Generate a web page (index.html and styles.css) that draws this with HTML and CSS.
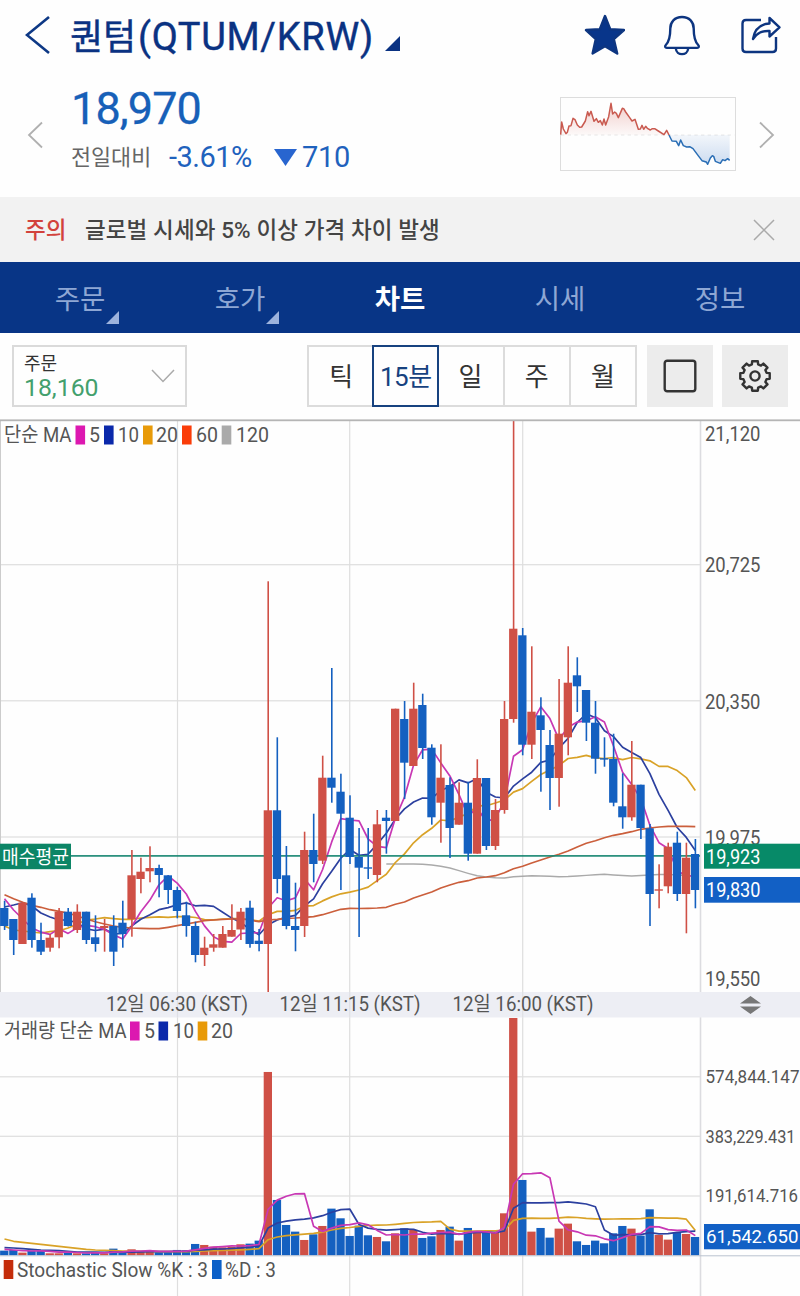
FILE: index.html
```html
<!DOCTYPE html>
<html lang="ko">
<head>
<meta charset="utf-8">
<title>퀀텀(QTUM/KRW)</title>
<link rel="stylesheet" href="styles.css">
</head>
<body>
<main class="app">
  <header class="titlebar">
    <svg class="back" width="26" height="40" viewBox="0 0 26 40"><path d="M24 2 2 20 24 38"/></svg>
    <h1 class="title"><span class="title-name">퀀텀</span><span class="title-pair">(QTUM/KRW)</span></h1>
    <svg class="title-mark" width="15" height="15" viewBox="0 0 15 15"><path d="M15 0V15H0Z"/></svg>
    <div class="actions">
      <svg width="42" height="42" viewBox="0 0 42 42"><path class="solid" d="M22 2 27.200 15.200 41 16 30.800 25 34.200 39.500 22 32.300 9.600 39.500 12.800 25 3 16 16.800 15.200Z"/></svg>
      <svg width="38" height="42" viewBox="0 0 38 42"><path d="M19 3C11.500 3 7.300 8 7.300 14.500 7.300 22.500 6.600 27.200 2.800 31 1.600 32.200 2.100 33.900 3.800 33.900H34.200C35.900 33.900 36.400 32.200 35.200 31 31.400 27.200 30.700 22.500 30.700 14.500 30.700 8 26.500 3 19 3ZM12.800 34.500C13.500 42 24.500 42 25.200 34.500"/></svg>
      <svg width="42" height="42" viewBox="0 0 42 42"><path d="M22 6H7Q3.500 6 3.500 9.500V34.500Q3.500 38 7 38H33.500Q37 38 37 34.500V23"/><path d="M30.500 4 40.500 13.300 30.500 22.500V17C23 16.500 18.500 18.500 14 25 15.500 15.500 21.500 10 30.500 9.500Z"/></svg>
    </div>
  </header>

  <section class="quote">
    <svg class="step" width="16" height="30" viewBox="0 0 16 30"><path d="M15 2.500 2 15 15 27.500"/></svg>
    <div class="quote-body">
      <strong class="price">18,970</strong>
      <div class="change"><span class="change-label">전일대비</span><span class="change-rate">-3.61%</span><svg width="23" height="17" viewBox="0 0 23 17"><path d="M0 0H23L11.500 17Z"/></svg><span class="change-diff">710</span></div>
    </div>
    <svg class="spark" width="176" height="74" viewBox="481 291 528 222">
      <defs>
        <linearGradient id="up" x1="0" y1="0" x2="0" y2="1"><stop offset="0" stop-color="#cf5147" stop-opacity=".28"/><stop offset="1" stop-color="#cf5147" stop-opacity=".03"/></linearGradient>
        <linearGradient id="down" x1="0" y1="0" x2="0" y2="1"><stop offset="0" stop-color="#1b62c0" stop-opacity=".05"/><stop offset="1" stop-color="#1b62c0" stop-opacity=".22"/></linearGradient>
      </defs>
      <rect class="spark-frame" x="482.500" y="292.500" width="525" height="219"/>
      <path class="spark-base" d="M484 405H1005"/>
      <path fill="url(#up)" d="M483 404 486 366 499 401 508 378 514 377 520 355 540 382 546 381 557 363 564 335 568 347 574 334 583 364 590 356 596 367 602 362 608 375 613 357 618 375 627 350 634 310 639 342 645 336 656 353 668 325 678 336 690 353 697 363 706 358 716 388 722 387 727 376 732 388 738 379 752 390 765 386 793 404 801 391 808 405Z"/>
      <path fill="url(#down)" d="M808 405 817 423 830 424 837 437 843 420 851 437 861 441 870 440 880 446 907 482 924 493 932 474 938 467 947 484 962 490 969 479 990 481V405Z"/>
      <path class="spark-up" d="M483 404 486 366 491 387 499 401 503 397 508 378 514 377 520 355 526 359 533 375 540 382 546 381 557 363 564 335 568 347 574 334 583 364 590 356 596 367 602 362 608 375 613 357 618 375 627 350 634 310 639 342 645 336 650 340 656 353 668 325 672 326 678 336 690 353 697 363 706 358 716 388 722 387 727 376 732 388 738 379 743 385 752 390 758 386 765 386 776 393 793 404 801 391 808 405"/>
      <path class="spark-down" d="M808 405 817 423 830 424 837 437 843 420 851 437 861 441 870 440 880 446 895 466 907 482 920 486 924 493 932 474 938 467 942 469 947 484 962 490 969 479 976 482 984 476 990 481"/>
    </svg>
    <svg class="step" width="16" height="30" viewBox="0 0 16 30"><path d="M1 2.500 14 15 1 27.500"/></svg>
  </section>

  <section class="notice">
    <b class="notice-tag">주의</b><span class="notice-text">글로벌 시세와 5% 이상 가격 차이 발생</span>
    <svg width="22" height="22" viewBox="0 0 22 22"><path d="M1 1 21 21M21 1 1 21"/></svg>
  </section>

  <nav class="tabs">
    <a class="tab tab-menu">주문</a><a class="tab tab-menu">호가</a><a class="tab tab-active">차트</a><a class="tab">시세</a><a class="tab">정보</a>
  </nav>

  <section class="toolbar">
    <div class="order">
      <div class="order-text"><span class="order-label">주문</span><span class="order-value">18,160</span></div>
      <svg width="24" height="14" viewBox="0 0 24 14"><path d="M1 1 12 12.500 23 1"/></svg>
    </div>
    <div class="periods">
      <span class="period">틱</span><span class="period period-active">15분</span><span class="period">일</span><span class="period">주</span><span class="period">월</span>
    </div>
    <div class="tool"><svg width="34" height="34" viewBox="0 0 34 34"><rect x="1.700" y="1.700" width="30.600" height="30.600" rx="2.500"/></svg></div>
    <div class="tool tool-last"><svg width="34" height="34" viewBox="-17 -17 34 34"><path id="gear"/><circle r="4.600"/></svg></div>
  </section>

  <svg id="chart" class="chart" width="800" height="877" viewBox="0 419 800 877"></svg>
</main>
<script src="chart.js"></script>
</body>
</html>
```

FILE: styles.css
```css
* { box-sizing: border-box; }
body { margin: 0; background: #fff; font-family: Roboto, "Noto Sans CJK KR", sans-serif; color: #333; }
.app { width: 800px; height: 1296px; display: flex; flex-direction: column; overflow: hidden; background: #fefefe; }
svg { display: block; flex: none; fill: none; }
span, b, strong, h1, a { white-space: nowrap; }

.titlebar { height: 73px; flex: none; display: flex; align-items: center; padding: 0 19px 0 25px; color: #0a3282; }
.back { stroke: #0d3885; stroke-width: 2.6; margin-top: -3px; }
.title { margin: 2px 0 0 19px; width: 305px; display: flex; align-items: baseline; font-weight: 400; font-size: 38px; line-height: 50px; -webkit-text-stroke: 0.4px #0a3282; }
.title-name { font-size: 36px; width: 68px; }
.title-pair { letter-spacing: 0.7px; }
.title-mark { margin: 14px 0 0 10px; fill: #0a3282; }
.actions { margin: -4px 0 0 auto; display: flex; align-items: center; gap: 38px; stroke: #0d3580; stroke-width: 2.4; stroke-linejoin: round; }
.actions .solid { fill: #08358a; }

.quote { height: 124px; flex: none; display: flex; padding: 0 25px 0 27px; }
.step { margin-top: 47px; stroke: #b0b0b0; stroke-width: 1.8; }
.quote-body { margin-left: 28px; width: 489px; display: flex; flex-direction: column; }
.price { font-weight: 400; font-size: 45px; line-height: 54px; letter-spacing: -0.9px; color: #1760b8; margin-top: 9px; -webkit-text-stroke: 0.3px #1760b8; }
.change { display: flex; align-items: center; height: 40px; margin-top: 1px; font-size: 29px; color: #1f62bd; }
.change-label { width: 98px; font-size: 21.800px; color: #666; margin-top: -3px; }
.change-rate { width: 105px; letter-spacing: -0.5px; }
.change svg { fill: #2865cf; }
.change-diff { margin-left: 5px; letter-spacing: -0.3px; }
.spark { margin: 24px 23px 0 1px; }
.spark-frame { stroke: #ddd; stroke-width: 3; }
.spark-base { stroke: #ddd; stroke-width: 2; stroke-dasharray: 10 10; }
.spark-up { stroke: #c95a50; stroke-width: 4.500; stroke-linejoin: round; }
.spark-down { stroke: #2a6eb5; stroke-width: 4.500; stroke-linejoin: round; }

.notice { height: 65px; flex: none; background: #f2f2f2; display: flex; align-items: center; padding: 0 25px 4px; font-size: 22.500px; }
.notice-tag { width: 60px; font-weight: 500; color: #d2423c; }
.notice-text { font-weight: 500; color: #444; letter-spacing: 0.1px; }
.notice svg { margin: 4px 0 0 auto; stroke: #aaa; stroke-width: 1.500; }

.tabs { height: 71px; flex: none; background: #083586; display: flex; }
.tab { flex: 1; position: relative; text-align: center; font-size: 27.500px; line-height: 76px; color: #8ea7d4; }
.tab-active { color: #fff; font-weight: 700; }
.tab-menu::after { content: ""; position: absolute; left: 106px; top: 49px; border-left: 13px solid transparent; border-bottom: 13px solid #9db3dd; }

.toolbar { height: 86px; flex: none; display: flex; align-items: flex-start; padding: 12px 12px 0; }
.order { width: 175px; height: 62px; border: 2px solid #dadada; display: flex; align-items: center; justify-content: space-between; padding: 0 10px; }
.order svg { stroke: #aaa; stroke-width: 1.500; }
.order-text { display: flex; flex-direction: column; }
.order-label { font-size: 18px; line-height: 22px; margin-top: 2px; }
.order-value { font-size: 24.800px; line-height: 26px; color: #43a06d; }
.periods { margin-left: 120px; display: flex; height: 62px; border: 2px solid #dcdcdc; width: 330px; }
.period { flex: 1; border-left: 2px solid #dcdcdc; text-align: center; font-size: 26px; line-height: 61px; color: #333; }
.period:first-child { border-left: 0; }
.period-active { margin: -2px -1px -2px -1px; border: 2px solid #17427f; color: #17427f; position: relative; flex: 0 0 67px; letter-spacing: -0.5px; }
.period-active + .period { border-left: 0; }
.tool { width: 66px; height: 62px; margin-left: 10px; background: #ececec; display: flex; align-items: center; justify-content: center; }
.tool svg { stroke: #333; stroke-width: 2.400; stroke-linejoin: round; }
.tool-last { margin-left: 9px; }

.chart { font-size: 20px; }
.chart .lbl { fill: #555; }
.chart .on { fill: #fff; }
```

FILE: chart.js
```js
// Candle: [direction, high, body top, body bottom, low] in chart units
const candles = [
['d',900.7,908,926,930],['d',919,919,940,955],['u',902,902.7,944,944],['d',893.3,897.7,940,947.7],['d',922.7,940,951.7,955],
['u',934,937.7,947.7,951.7],['u',908,911.7,937.3,948.3],['d',908,911.7,926,926.5],['u',904.3,911.7,930,933],['d',911.7,911.7,940,944],
['d',915.3,937.3,944,951.7],['u',919,926,928,951.7],['d',915.3,926,951.7,966],['d',900.7,922.7,934,947.7],['u',850,875.3,919,936.7],
['u',857.7,871.7,879,893.3],['u',846.3,868,871.3,882.3],['d',864.7,868,875,897.3],['d',875.3,875.3,890,904],['d',886.7,890,911,918.3],
['d',901.7,915.3,926,936.7],['d',921.7,926,955,962.3],['u',936.7,947.7,955,966],['u',934,944.3,947.7,951.7],['u',926,934,947.7,947.7],
['u',904.3,930,936.7,936.7],['u',908,911.7,929.5,940],['d',900.7,907.7,944,947.7],['d',929,940.7,944,951.3],['u',581.3,810.3,944,992],
['d',737.3,810.3,879,893.3],['d',846,875.3,926,929.3],['d',882.7,926,930,951.3],['u',831.7,850,926,937],['d',813.7,850,864,882.3],
['u',755.7,777.7,860.7,864],['d',668,777.7,787.7,802.7],['d',773.7,791.7,813.7,890],['d',795.3,817.7,857,864],['d',828,857,867.7,937],
['d',828,867.3,868.7,879],['u',810,824.3,875,882.3],['d',810,817.7,821,853.7],['u',708.7,708.7,821,821],['d',701,719,762.7,799],
['u',682.7,708.7,766,766],['d',693.7,705,748,759],['d',744.3,747.7,817.3,824.7],['u',744.3,777.7,802.7,842.7],['d',777.3,785,828,858],
['u',782.3,802.7,824.7,824.7],['d',781.7,802.7,853.7,860.7],['u',759.3,778,853.7,853.7],['d',778,778,846,850],['u',799,810,846,850],
['u',701,719,810,813.7],['u',421,628.7,719,722.7],['d',628,635.3,744.7,755.3],['u',646.3,711.7,744.7,759],['d',697.3,715.3,730,791.7],
['d',730,745,778,810],['u',679,733.7,778,806.7],['u',646.3,682.7,737.3,755.3],['d',657.3,675.3,686.3,712],['d',690,690,722.7,741],
['d',701,722.7,758.7,773.7],['d',737.3,758.2,759.6,766.7],['d',733.7,759,802.7,806.3],['d',773.3,806.3,817.3,828.7],['u',741,784.7,817.3,820.7],
['d',784.7,784.7,828,839],['d',824,828.3,894,926],['u',864.3,889.3,890.7,908.3],['u',842.7,846.7,886.3,893.3],['d',831.7,842.7,894,901],
['u',842.7,857.7,894,933.3],['d',839,854,890,908.3]];

// Volume bar heights, in thirds of a pixel
const volumes = [14,16,8,14,14,6,6,10,6,6,10,6,20,9,18,11,13,9,9,16,15,34,31,26,24,26,33,35,44,550,166,91,71,46,63,88,140,111,58,89,60,55,42,66,81,76,52,57,76,86,44,82,71,69,69,126,732,226,71,82,53,80,95,42,31,44,36,66,88,80,59,138,61,47,69,64,55];
const BASE = 1255.3, X0 = 4.5, STEP = 9.09;
const RED = '#cf5046', BLUE = '#1460c0';
const MAG = '#c838b4', NAVY = '#2c409f', GOLD = '#d9a227', ORANGE = '#cb5f3c', GREY = '#aaa';
const x = i => +(X0 + STEP * i).toFixed(1);

// Moving average with values known for bars before the window fills
function average(values, n, head) {
  return values.map((_, i) => i < n - 1 ? head[i] : values.slice(i - n + 1, i + 1).reduce((a, b) => a + b) / n);
}
const line = (ys, color, start = 0, w = 1.7) =>
  `<polyline points="${ys.map((y, i) => x(i + start) + ',' + y.toFixed(1)).join(' ')}" stroke="${color}" stroke-width="${w}" stroke-linejoin="round"/>`;
const rect = (a, b, w, h, f) => `<rect x="${a}" y="${b}" width="${w}" height="${h}" fill="${f}"/>`;
const text = (a, b, s, w, size = 20, cls = 'lbl') =>
  `<text class="${cls}" x="${a}" y="${b}" font-size="${size}" textLength="${w}" lengthAdjust="spacingAndGlyphs">${s}</text>`;

let out = '';
for (const y of [564.7, 700.8, 837, 1076.8, 1136.3, 1196]) out += rect(0, y - .6, 700, 1.2, '#dedede');
for (const gx of [177.5, 349.7, 522.7]) out += rect(gx - .6, 421, 1.2, 875, '#dedede');
out += rect(0, 421, 1, 571, '#ccc') + rect(699.7, 421, 1.6, 875, '#dcdce0');

const closes = candles.map(c => c[0] === 'u' ? c[2] : c[3]);
const ma60 = [894.7,898.7,902.3,905.3,907.3,909.7,911.3,913,916,919,921.7,924,926,927.3,928,928.3,928.7,928.7,927.3,925.7,924,922.3,920.7,920,919.3,919,919,920,921.7,920,919.3,918.3,918,917.3,916.7,914.7,912,909.3,908.3,908.5,908.3,908,907.3,904.3,902,898,895,892,888,885,882.3,880.7,878,877,875.7,872.7,868.7,866.3,863,860,857,854.3,851,847,843.3,840.7,837.7,835.3,833.7,831.7,829.3,828,827,826.3,826.3,826.3,826.7];
const ma120 = [864,864,864,864,864.3,865,866.3,868,870.7,873.3,875.7,877,877.7,878,876.7,876.2,875.7,876,876.3,876.7,876.5,876,875.4,874.8,874.3,875,875.5,876,875.5,875,874.5,874.4,875,875.5,876];
out += line(ma120, GREY, 42, 1.4);
out += line(average(closes, 20, [926,930,931,932,933,931.7,930.7,928,924,920,919,917.7,918.7,919.3,919.3,918,917.3,916.8,917.3]), GOLD);
out += line(average(closes, 10, [907,905,902.7,906,913,917,920,920,923]), NAVY);
out += line(average(closes, 5, [898.7,910,919,928]), MAG);
out += line(ma60, ORANGE);
out += rect(71, 855.1, 629, 1.6, '#168570');
candles.forEach(([dir, high, top, bottom, low], i) => {
  const c = dir === 'u' ? RED : BLUE, l = Math.max(0, x(i) - 4.4);
  out += rect(x(i) - .7, high, 1.6, low - high, c) + rect(l, top, x(i) + 3.9 - l, bottom - top, c);
});

volumes.forEach((v, i) => {
  const top = Math.max(1018, BASE - v / 3), l = Math.max(0, x(i) - 4.4);
  out += rect(l, top, x(i) + 3.9 - l, BASE - top, candles[i][0] === 'u' ? RED : BLUE);
});
const tops = volumes.map(v => BASE - v / 3), head = a => a.map(v => 1000 + v / 3);
out += line(average(tops, 20, head([717,724,727,730,733,736,739,742,745,748,750,751,752,753,753,754,754,755,755])), GOLD);
out += line(average(tops, 10, head([743,744,746,748,750,751,752,754,756])), NAVY);
out += line(average(tops, 5, head([748,750,752,753])), MAG);
out += rect(0, 1255.3, 800, 1, '#b9c2cf');

// Time axis and panel borders
out += rect(0, 419.4, 800, 1.8, '#b5b5b5') + rect(0, 992, 800, 25.5, '#edeef4');
for (const gx of [177.5, 349.7, 522.7]) out += rect(gx - .6, 992, 1.2, 25.5, '#dfe0e5');
out += text(106, 1011, '12일 06:30 (KST)', 142) + text(279.500, 1011, '12일 11:15 (KST)', 141) + text(452.500, 1011, '12일 16:00 (KST)', 141);
out += '<path fill="#777" d="M740 1003.500 750.500 996 761 1003.500ZM740 1006.500H761L750.500 1014Z"/>';

// Legends
const swatches = list => list.forEach(([a, y, f]) => out += rect(a, y, 9.6, 19, f));
out += text(4, 442, '단순 MA', 67.500) + text(89, 442, '5', 11) + text(118, 442, '10', 21) + text(156, 442, '20', 22) + text(196, 442, '60', 22) + text(236, 442, '120', 33);
swatches([[75.500,425.500,'#dc18b0'],[104,425.500,'#0a28aa'],[143,425.500,'#e89a08'],[182,425.500,'#fa3c08'],[221.700,425.500,'#aaa']]);
out += text(4, 1038, '거래량 단순 MA', 122.500) + text(144, 1038, '5', 11) + text(173, 1038, '10', 21) + text(211, 1038, '20', 22);
swatches([[130,1021.500,'#dc18b0'],[158.500,1021.500,'#0a28aa'],[197.700,1021.500,'#e89a08']]);
out += text(17, 1276.500, 'Stochastic Slow %K : 3', 191) + text(225, 1276.500, '%D : 3', 51);
swatches([[3.700,1260,'#c42c0a'],[212,1260,'#0c60c8']]);

// Price axis
[['21,120',441],['20,725',572],['20,350',708.500],['19,975',844.500],['19,550',986]].forEach(([s, y]) => out += text(705, y, s, 55.500));
out += rect(0, 843.700, 71, 25.500, '#0c8566') + text(2, 863.500, '매수평균', 67, 19, 'on');
out += rect(704, 843.700, 96, 25, '#078a68') + text(706, 863.500, '19,923', 54.500, 20, 'on');
out += rect(704, 877, 96, 25.700, '#1260c5') + text(706, 897, '19,830', 54.500, 20, 'on');
out += text(705.500, 1083, '574,844.147', 94, 18.500) + text(705.500, 1143, '383,229.431', 90, 18.500) + text(705.500, 1202, '191,614.716', 92.500, 18.500);
out += rect(704, 1224, 96, 25.300, '#1260c5') + text(706, 1243, '61,542.650', 92.500, 19, 'on');
document.getElementById('chart').innerHTML = out;

// Eight-toothed gear outline
const pts = [];
for (let t = 0; t < 8; t++) for (const [off, r] of [[-15, 12], [-11, 15], [11, 15], [15, 12]]) {
  const a = (t * 45 + off) * Math.PI / 180;
  pts.push((r * Math.sin(a)).toFixed(2) + ' ' + (-r * Math.cos(a)).toFixed(2));
}
document.getElementById('gear').setAttribute('d', 'M' + pts.join('L') + 'Z');
```
